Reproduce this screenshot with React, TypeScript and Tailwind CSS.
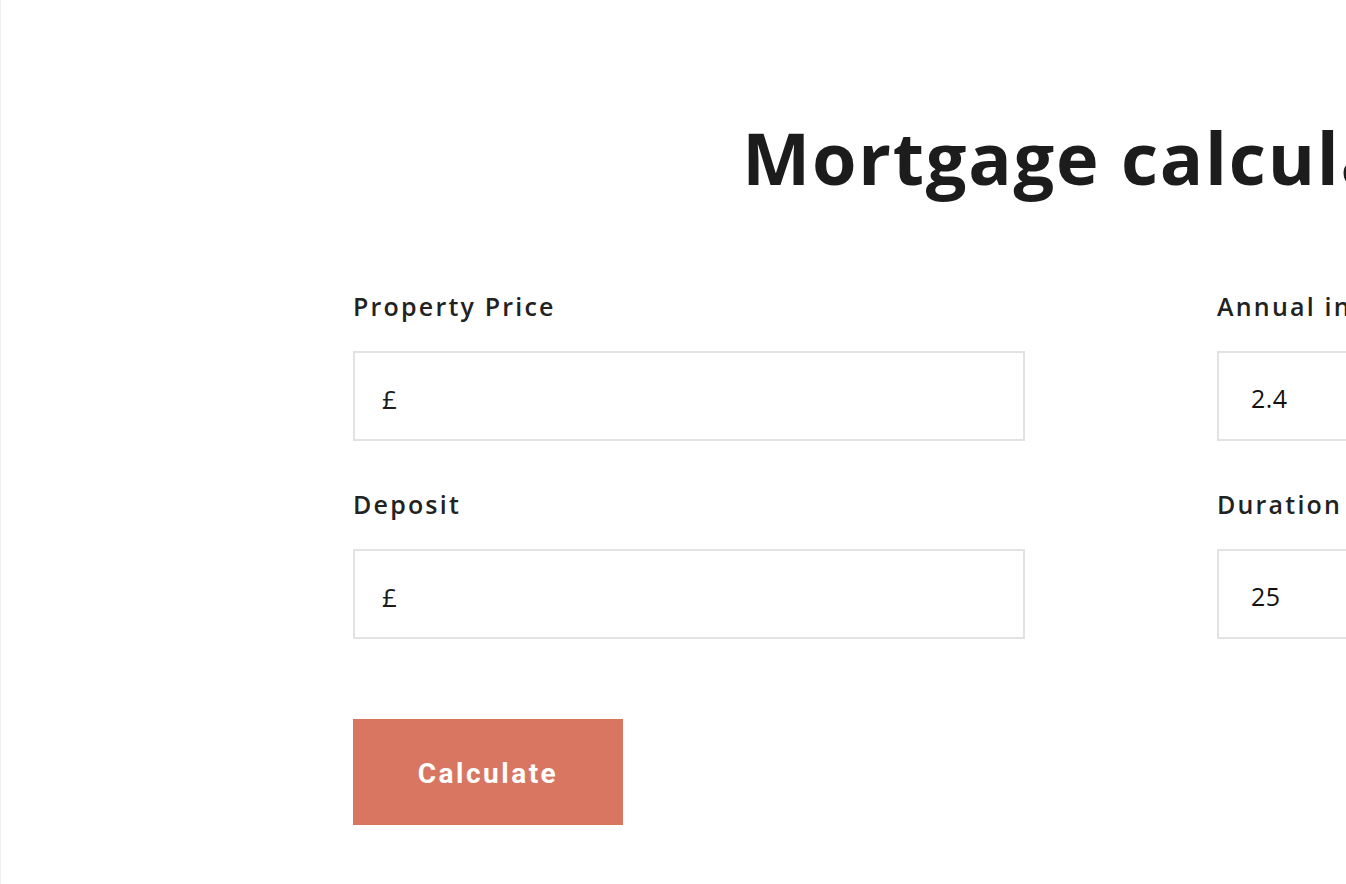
import { useState } from 'react';

type Field = {
  label: string;
  prefix?: string;
  value: string;
};

const left: Field[] = [
  { label: 'Property Price', prefix: '£', value: '' },
  { label: 'Deposit', prefix: '£', value: '' },
];

const right: Field[] = [
  { label: 'Annual interest rate (%)', value: '2.4' },
  { label: 'Duration (years)', value: '25' },
];

function InputField({ field }: { field: Field }) {
  const [value, setValue] = useState(field.value);
  return (
    <div className="flex flex-col">
      <label className="text-[25px] leading-[30px] font-semibold text-[#222] tracking-[2.2px]">{field.label}</label>
      <div className="mt-[30px] flex items-center h-[90px] border-2 border-[#e2e2e2] bg-white px-[27px] pt-[6px]">
        {field.prefix && <span className="text-[26px] text-[#1c1c1c] mr-1">{field.prefix}</span>}
        <input
          value={value}
          onChange={(e) => setValue(e.target.value)}
          className={`w-full bg-transparent text-[25px] tracking-[0.5px] text-[#111] outline-none ${field.prefix ? '' : 'pl-[5px]'}`}
        />
      </div>
    </div>
  );
}

export default function App() {
  return (
    <div className="w-full h-[884px] overflow-hidden bg-white border-l border-[#efefef] font-['Open_Sans','Lato',sans-serif]">
      <div className="w-[1536px] ml-[352px]">
        <h1 className="pt-[112px] text-center text-[72px] leading-[90px] font-bold text-[#1c1c1c] tracking-[1.8px]">
          Mortgage calculator
        </h1>

        <div className="mt-[89px] grid grid-cols-2 gap-x-[192px]">
          <div className="flex flex-col gap-y-[48px]">
            {left.map((f) => (
              <InputField key={f.label} field={f} />
            ))}
          </div>
          <div className="flex flex-col gap-y-[48px]">
            {right.map((f) => (
              <InputField key={f.label} field={f} />
            ))}
          </div>
        </div>

        <button className="mt-[80px] w-[270px] h-[106px] pt-[3px] bg-[#d97662] text-white text-[28px] font-bold tracking-[2.5px] font-['Roboto','Inter',sans-serif]">
          Calculate
        </button>
      </div>
    </div>
  );
}
